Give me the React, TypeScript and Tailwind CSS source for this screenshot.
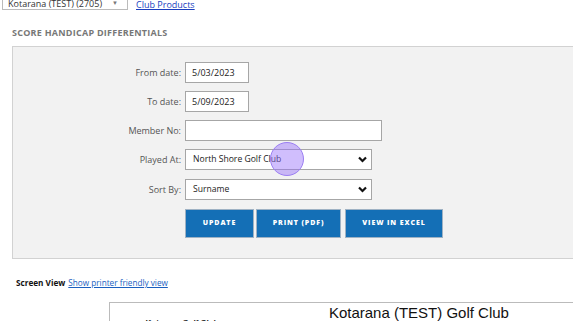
import React from "react";

const font = { fontFamily: '"Open Sans", "Liberation Sans", sans-serif' };

function Chevron() {
  return (
    <svg width="9" height="7" viewBox="0 0 9 7" className="shrink-0">
      <path d="M1 1.5 L4.5 5 L8 1.5" stroke="#111" strokeWidth="2.2" fill="none" strokeLinejoin="miter" />
    </svg>
  );
}

function Row({ label, children }: { label: string; children: React.ReactNode }) {
  return (
    <div className="flex items-center">
      <div className="w-[172px] text-right text-[9px] text-[#555] pr-[4px] leading-none">{label}</div>
      {children}
    </div>
  );
}

export default function App() {
  return (
    <div className="w-[573px] h-[321px] overflow-hidden bg-white relative" style={font}>
      {/* Top bar */}
      <div className="flex items-end h-[10px] pl-[2px]">
        <div className="w-[126px] h-[14px] border border-[#bbb] bg-white flex items-center justify-between pl-[5px] pr-[9px] text-[9px] text-[#333] leading-none">
          <span>Kotarana (TEST) (2705)</span>
          <span className="text-[6px] text-[#777]">▼</span>
        </div>
        <a className="ml-[8px] mb-[1px] text-[9px] text-[#1a3fbf] underline leading-none">Club Products</a>
      </div>

      <div className="pl-[12px] pt-[18px] text-[9px] font-bold text-[#777] tracking-[0.25px] leading-none">
        SCORE HANDICAP DIFFERENTIALS
      </div>

      {/* Panel */}
      <div className="ml-[12px] mt-[9px] w-[600px] h-[213px] border border-[#d2d2d2] bg-[#f2f2f2] pt-[15px] flex flex-col">
        <div className="flex flex-col gap-[8px]">
          <Row label="From date:">
            <div className="w-[64px] h-[21px] border border-[#a6a6a6] bg-white flex items-center pl-[6px] text-[9px] text-[#222]">5/03/2023</div>
          </Row>
          <Row label="To date:">
            <div className="w-[64px] h-[21px] border border-[#a6a6a6] bg-white flex items-center pl-[6px] text-[9px] text-[#222]">5/09/2023</div>
          </Row>
          <Row label="Member No:">
            <div className="w-[197px] h-[21px] border border-[#a6a6a6] bg-white" />
          </Row>
          <Row label="Played At:">
            <div className="w-[187px] h-[21px] border border-[#a6a6a6] bg-white flex items-center justify-between pl-[7px] pr-[4px] text-[8.6px] text-[#222]">
              <span>North Shore Golf Club</span>
              <Chevron />
            </div>
          </Row>
        </div>
        <div className="mt-[9px]">
          <Row label="Sort By:">
            <div className="w-[187px] h-[21px] border border-[#a6a6a6] bg-white flex items-center justify-between pl-[7px] pr-[4px] text-[8.6px] text-[#222]">
              <span>Surname</span>
              <Chevron />
            </div>
          </Row>
        </div>
        <div className="flex mt-[9px] pl-[172px]">
          <button className="w-[69px] h-[29px] bg-[#146fb6] border border-[#9fb2c4] text-white text-[7px] font-extrabold tracking-[0.9px]">UPDATE</button>
          <button className="ml-[2px] w-[85px] h-[29px] bg-[#146fb6] border border-[#9fb2c4] text-white text-[7px] font-extrabold tracking-[0.9px]">PRINT (PDF)</button>
          <button className="ml-[4px] w-[98px] h-[29px] bg-[#146fb6] border border-[#9fb2c4] text-white text-[7px] font-extrabold tracking-[0.9px]">VIEW IN EXCEL</button>
        </div>
      </div>

      {/* Screen view */}
      <div className="mt-[20px] pl-[16px] text-[8.2px] leading-none flex gap-[3px]">
        <span className="font-bold text-[#111]">Screen View</span>
        <a className="text-[#1a5fbf] underline">Show printer friendly view</a>
      </div>

      {/* Report box */}
      <div className="ml-[109px] mt-[15px] w-[500px] h-[40px] border border-[#bbb] flex">
        <div className="pl-[35px] pt-[14px] text-[8px] font-bold italic text-[#111]" style={{ fontFamily: '"Liberation Sans", sans-serif' }}>
          Kotarana Golf Club
        </div>
        <div className="pl-[111px] pt-[2px] text-[15px] text-[#111] leading-none" style={{ fontFamily: '"Liberation Sans", sans-serif' }}>
          Kotarana (TEST) Golf Club
        </div>
      </div>

      {/* Click indicator */}
      <div className="absolute left-[270px] top-[142px] w-[34px] h-[34px] rounded-full bg-[rgba(150,110,250,0.45)] border-[1.5px] border-[#9b7ef2]" />
    </div>
  );
}
